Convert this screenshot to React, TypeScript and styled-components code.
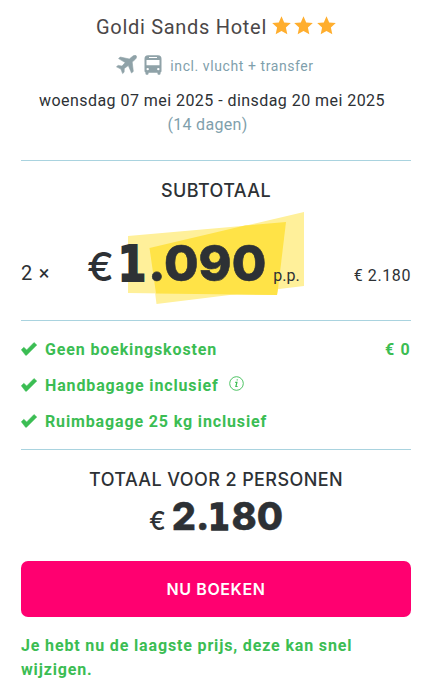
import React from "react";
import styled, { createGlobalStyle } from "styled-components";

const Global = createGlobalStyle`
  *, *::before, *::after { box-sizing: border-box; }
  body { margin: 0; background: #fff; color: #2d3135; font-family: Roboto, "Liberation Sans", sans-serif; }
  svg { display: block; flex: none; }
`;

const Card = styled.main`
  width: 429px;
  height: 687px;
  padding: 12px 18px 0 21px;
  overflow: hidden;
`;

const Summary = styled.header`
  height: 149px;
  border-bottom: 1px solid #a9d3df;
`;

const HotelLine = styled.div`
  display: flex;
  justify-content: center;
  align-items: center;
  height: 30px;
`;

const HotelName = styled.h1`
  margin: 0 5px 0 0;
  font-size: 20px;
  line-height: 30px;
  font-weight: 400;
  letter-spacing: 0.7px;
  color: #4b4748;
  white-space: nowrap;
`;

const Stars = styled.div`
  display: flex;
  gap: 3.5px;
  margin-top: -3px;
`;

const Included = styled.div`
  display: flex;
  justify-content: center;
  align-items: center;
  height: 24px;
  margin-top: 11px;
  padding-right: 2px;
  color: #8fa2a8;
`;

const BusSlot = styled.span`
  margin-left: 7px;
`;

const IncludedText = styled.span`
  margin: 2px 0 0 8px;
  font-size: 14px;
  letter-spacing: 0.58px;
  color: #7f9fac;
  white-space: nowrap;
`;

const Dates = styled.p<{ $muted?: boolean }>`
  margin: ${(p) => (p.$muted ? "0" : "12px 0 0")};
  padding-right: ${(p) => (p.$muted ? "17px" : "8px")};
  font-size: 16px;
  line-height: 24px;
  letter-spacing: ${(p) => (p.$muted ? "0.3px" : "0.45px")};
  text-align: center;
  white-space: nowrap;
  color: ${(p) => (p.$muted ? "#7f9fac" : "#2d3135")};
`;

const Subtotal = styled.section`
  height: 160px;
  border-bottom: 1px solid #a9d3df;
`;

const Heading = styled.h2`
  margin: 0;
  padding-top: 18px;
  font-family: Inter, sans-serif;
  font-size: 18px;
  line-height: 24px;
  height: 42px;
  font-weight: 500;
  letter-spacing: 0.4px;
  text-align: center;
  white-space: nowrap;
`;

const PriceRow = styled.div`
  display: grid;
  grid-template-columns: 67px 216px 1fr;
  height: 92px;
  margin-top: 9px;
`;

const Quantity = styled.span`
  padding-top: 48px;
  font-size: 20px;
  line-height: 26px;
  letter-spacing: 0.8px;
`;

const Highlighted = styled.div`
  position: relative;
  height: 92px;
`;

const Marker = styled.svg`
  position: absolute;
  left: 40px;
  top: 0;
`;

const PriceLine = styled.div`
  position: relative;
  display: flex;
  align-items: baseline;
  margin-left: -1px;
  padding-top: 22px;
  white-space: nowrap;
`;

const Euro = styled.span<{ $size: number; $gap: number }>`
  font-family: Inter, sans-serif;
  font-size: ${(p) => p.$size}px;
  font-weight: 500;
  margin-right: ${(p) => p.$gap}px;
`;

const Digits = styled.strong<{ $size: number }>`
  font-family: Inter, sans-serif;
  font-size: ${(p) => p.$size}px;
  line-height: 58px;
  font-weight: 800;
  -webkit-text-stroke: 0.012em currentColor;
`;

const FootedOne = styled.span`
  display: inline-block;
  font-family: "DejaVu Sans", sans-serif;
  font-weight: 700;
  line-height: 1;
  width: 0.58em;
  text-indent: -0.03em;
  transform: scaleX(0.82);
  transform-origin: left;
  -webkit-text-stroke: 0.04em currentColor;
`;

const PerPerson = styled.span`
  margin-left: 7px;
  font-size: 16px;
`;

const Amount = styled.span`
  padding-top: 51px;
  font-size: 16px;
  line-height: 26px;
  letter-spacing: 0.6px;
  text-align: right;
`;

const Benefits = styled.ul`
  list-style: none;
  height: 129px;
  margin: 0;
  padding: 16px 0 0;
  border-bottom: 1px solid #a9d3df;
  color: #3bbd53;
`;

const Benefit = styled.li`
  display: flex;
  align-items: center;
  height: 24px;
  margin-bottom: 12px;
  font-size: 16px;
  font-weight: 700;
  letter-spacing: 0.86px;
`;

const BenefitLabel = styled.span`
  margin: 0 10px 0 8px;
  white-space: nowrap;
`;

const BenefitPrice = styled.span`
  margin-left: auto;
  letter-spacing: 1.2px;
`;

const InfoSlot = styled.span`
  margin-top: -3px;
`;

const Total = styled.section`
  height: 111px;
`;

const TotalPrice = styled.div`
  display: flex;
  justify-content: center;
  align-items: baseline;
  margin-top: -5px;
`;

const BookButton = styled.button`
  display: block;
  width: 100%;
  height: 56px;
  border: 0;
  border-radius: 7px;
  background: #ff0070;
  color: #fff;
  font: 600 16px/56px Inter, sans-serif;
  letter-spacing: 0.6px;
  padding: 0;
`;

const Notice = styled.p`
  margin: 17px 0 0;
  color: #3bbd53;
  font-size: 16px;
  line-height: 24px;
  font-weight: 700;
  letter-spacing: 0.85px;
`;

const Star = () => (
  <svg width="19" height="19" viewBox="0 0 19 19" fill="#ffae2e">
    <path d="M9.5.3 12.2 6.4 18.8 7.1 13.9 11.6 15.3 18.2 9.5 14.9 3.7 18.2 5.1 11.6.2 7.1 6.8 6.4Z" />
  </svg>
);

const Plane = () => (
  <svg width="21" height="20" viewBox="0 0 21 20" fill="currentColor" stroke="currentColor" strokeWidth=".6" strokeLinejoin="round">
    <path d="M20.2.8c-.9-.9-2.5-.4-3.6.5L13.3 4 4.2 2 2.6 3.6l6.6 4-3.2 3.5-3.9-.7L.5 11.8l4.4 2.3 1.7 4.5 1.5-1.4.2-3.7 4-3 3.2 7.5 1.8-1.6-1.1-9.3 3.1-2.8c1-.9 1.7-2.6.9-3.5Z" />
  </svg>
);

const Bus = () => (
  <svg width="18" height="20" viewBox="0 0 18 20" fill="currentColor">
    <path fillRule="evenodd" d="M4 .3h10c2.4 0 3.5 1.3 3.5 3.4V16c0 .8-.4 1.2-1 1.5v1.3c0 1.3-3 1.3-3 0v-1.1h-9v1.1c0 1.3-3 1.3-3 0v-1.3c-.6-.3-1-.7-1-1.5V3.7C.5 1.6 1.6.3 4 .3ZM5 2v1h8V2H5ZM2.5 5v5.200h13V5h-13Zm1.200 7.900a1.200 1.200 0 1 0 0 2.400 1.200 1.200 0 0 0 0-2.400Zm10.600 0a1.200 1.200 0 1 0 0 2.400 1.200 1.200 0 0 0 0-2.400Z" />
  </svg>
);

const Check = () => (
  <svg width="16" height="14" viewBox="0 0 16 14" fill="currentColor">
    <path d="M.3 7.8 2.8 5.3 5.7 7.9 13 .5 15.8 3 5.5 13.3H4.6Z" stroke="currentColor" strokeWidth=".5" strokeLinejoin="round" />
  </svg>
);

const Info = () => (
  <svg width="15" height="15" viewBox="0 0 15 15" fill="none" stroke="currentColor">
    <circle cx="7.5" cy="7.5" r="6.8" strokeWidth=".9" />
    <path d="M6.2 6.3h1.7l-1 4.2h1.7M7.7 3.9h1" strokeWidth="1.2" />
  </svg>
);

export default function App() {
  return (
    <Card>
      <Global />
      <Summary>
        <HotelLine>
          <HotelName>Goldi Sands Hotel</HotelName>
          <Stars><Star /><Star /><Star /></Stars>
        </HotelLine>
        <Included>
          <Plane />
          <BusSlot><Bus /></BusSlot>
          <IncludedText>incl. vlucht + transfer</IncludedText>
        </Included>
        <Dates>woensdag 07 mei 2025 - dinsdag 20 mei 2025</Dates>
        <Dates $muted>(14 dagen)</Dates>
      </Summary>
      <Subtotal>
        <Heading>SUBTOTAAL</Heading>
        <PriceRow>
          <Quantity>2 ×</Quantity>
          <Highlighted>
            <Marker width="177" height="92" viewBox="0 0 177 92">
              <path d="M0 24 158 10 149 83 0 81Z" fill="#fff09a" />
              <path d="M21.5 36 176 0V74L28.5 92Z" fill="#fff09a" />
              <path d="M21.5 36 117 13.6 158 10 150 77 149 83 28 81.4Z" fill="#ffe347" />
            </Marker>
            <PriceLine>
              <Euro $size={40} $gap={5}>€</Euro>
              <Digits $size={50}><FootedOne>1</FootedOne>.090</Digits>
              <PerPerson>p.p.</PerPerson>
            </PriceLine>
          </Highlighted>
          <Amount>€ 2.180</Amount>
        </PriceRow>
      </Subtotal>
      <Benefits>
        <Benefit>
          <Check />
          <BenefitLabel>Geen boekingskosten</BenefitLabel>
          <BenefitPrice>€ 0</BenefitPrice>
        </Benefit>
        <Benefit>
          <Check />
          <BenefitLabel>Handbagage inclusief</BenefitLabel>
          <InfoSlot><Info /></InfoSlot>
        </Benefit>
        <Benefit>
          <Check />
          <BenefitLabel>Ruimbagage 25 kg inclusief</BenefitLabel>
        </Benefit>
      </Benefits>
      <Total>
        <Heading>TOTAAL VOOR 2 PERSONEN</Heading>
        <TotalPrice>
          <Euro $size={25} $gap={6}>€</Euro>
          <Digits $size={38}>2.<FootedOne>1</FootedOne>80</Digits>
        </TotalPrice>
      </Total>
      <BookButton>NU BOEKEN</BookButton>
      <Notice>Je hebt nu de laagste prijs, deze kan snel wijzigen.</Notice>
    </Card>
  );
}
